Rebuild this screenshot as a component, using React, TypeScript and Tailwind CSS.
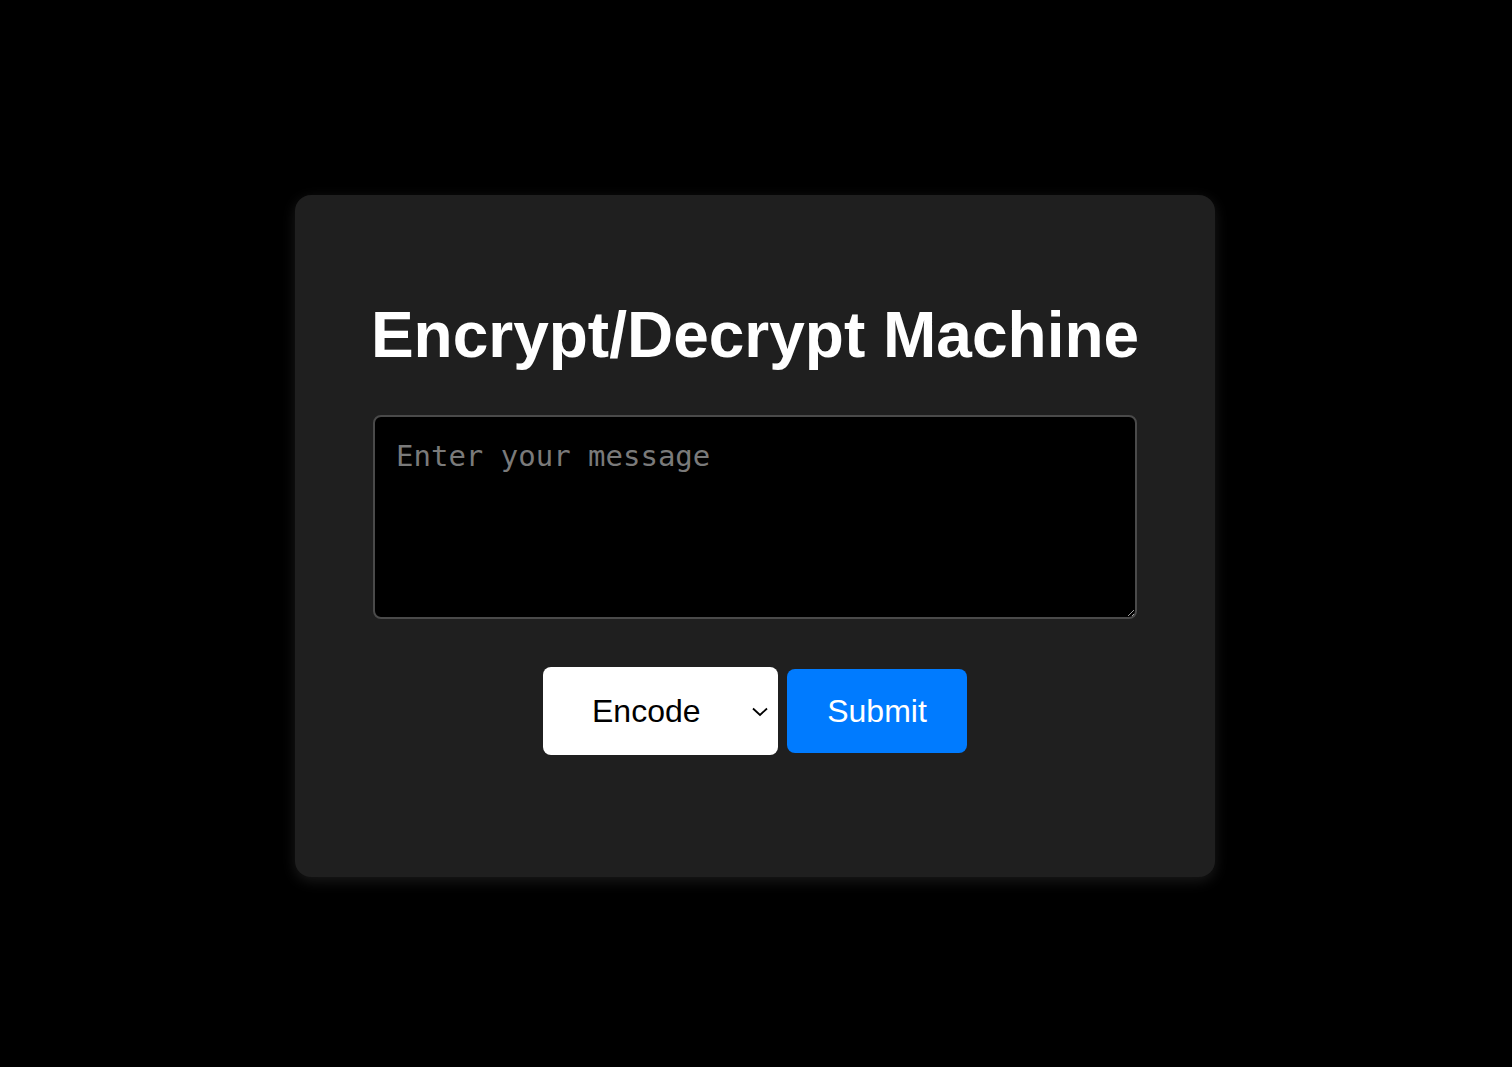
export default function App() {
  return (
    <div className="min-h-screen bg-black pt-[195px] pr-[2px] font-['Liberation_Sans',Arial,sans-serif]">
      <div className="mx-auto flex w-[920px] flex-col items-center rounded-2xl bg-[#1f1f1f] pt-[103px] pb-[122px] shadow-[0_4px_14px_rgba(255,255,255,0.1)]">
        <h1 className="text-[64px] font-bold leading-[normal] text-white">Encrypt/Decrypt Machine</h1>

        <textarea
          placeholder="Enter your message"
          className="mt-[43px] h-[204px] w-[764px] rounded-lg border-2 border-[#4a4a4a] bg-black px-[21px] pt-[18px] font-['DejaVu_Sans_Mono',monospace] text-[29px] text-white placeholder:text-[#7a7a7a] outline-none"
        />

        <div className="mt-[48px] flex items-center gap-[9px]">
          <div className="relative h-[88px] w-[235px]">
            <select className="h-full w-full appearance-none rounded-lg bg-white pl-[49px] text-[32px] text-black outline-none">
              <option>Encode</option>
              <option>Decode</option>
            </select>
            {/* dropdown chevron */}
            <svg
              className="pointer-events-none absolute right-[9px] top-[40px] h-[10px] w-[18px]"
              viewBox="0 0 18 10"
              fill="none"
              stroke="black"
              strokeWidth="1.8"
            >
              <polyline points="2,1.5 9,8 16,1.5" />
            </svg>
          </div>
          <button className="h-[84px] w-[180px] rounded-lg bg-[#007bff] text-[32px] text-white">Submit</button>
        </div>
      </div>
    </div>
  )
}
